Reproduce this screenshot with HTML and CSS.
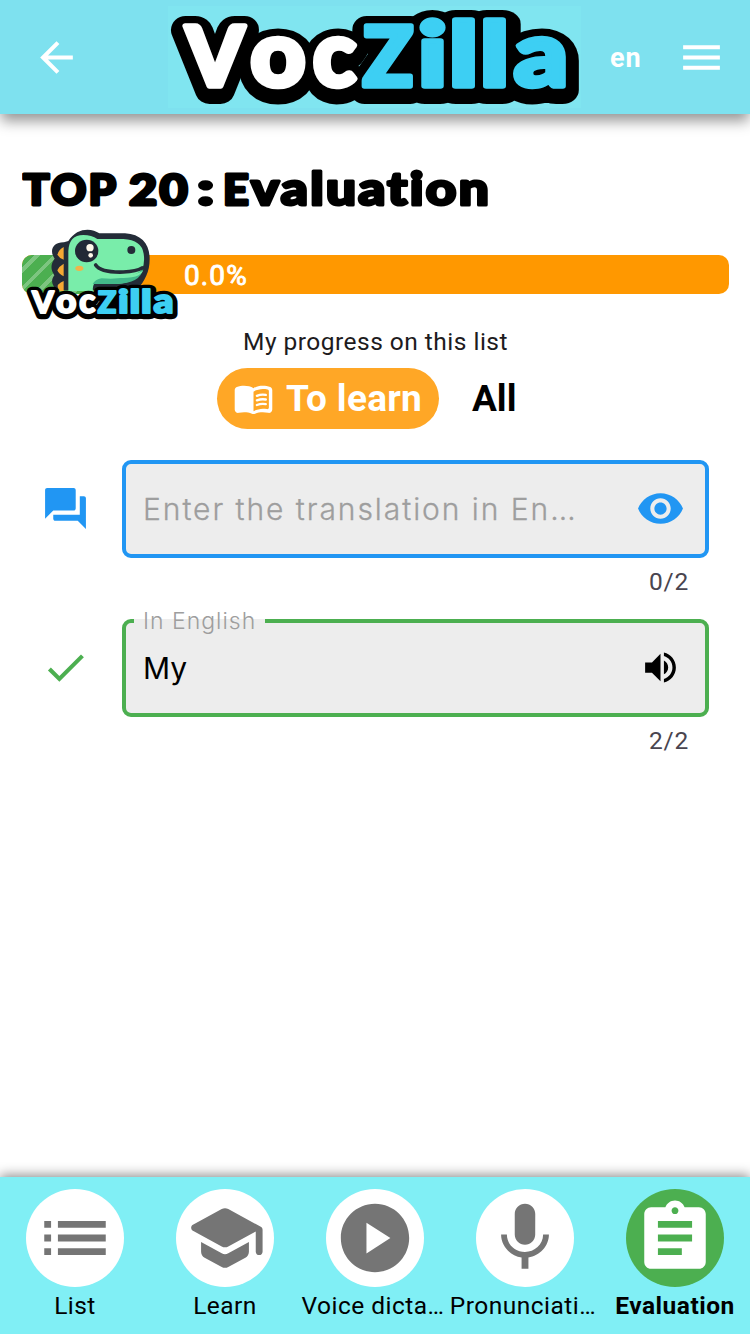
FILE: index.html
```html
<!DOCTYPE html>
<html lang="en">
<head>
<meta charset="utf-8">
<title>VocZilla</title>
<link rel="stylesheet" href="styles.css">
</head>
<body>
<div class="app">
  <header class="topbar">
    <svg class="back" viewBox="0 0 24 24"><path d="M20 11H7.83l5.59-5.59L12 4l-8 8 8 8 1.41-1.41L7.83 13H20v-2z"/></svg>
    <svg class="logo" viewBox="168 6 413 102">
      <defs>
        <g id="voc">
          <text x="186" y="85.5" font-size="81" textLength="58" lengthAdjust="spacingAndGlyphs">V</text>
          <text x="250.5" y="85.5" font-size="91" textLength="55" lengthAdjust="spacingAndGlyphs">o</text>
          <text x="313" y="85.5" font-size="91" textLength="43" lengthAdjust="spacingAndGlyphs">c</text>
        </g>
        <g id="zilla">
          <text x="363" y="85.5" font-size="81" textLength="50" lengthAdjust="spacingAndGlyphs">Z</text>
          <text x="418" y="85.5" font-size="87" textLength="29" lengthAdjust="spacingAndGlyphs">i</text>
          <text x="449" y="85.5" font-size="87" textLength="29" lengthAdjust="spacingAndGlyphs">l</text>
          <text x="480" y="85.5" font-size="87" textLength="29" lengthAdjust="spacingAndGlyphs">l</text>
          <text x="514" y="85.5" font-size="91" textLength="54" lengthAdjust="spacingAndGlyphs">a</text>
        </g>
        <g id="wordmark" class="wordmark">
          <g class="shade"><use href="#voc" y="4"/><use href="#zilla" y="4"/></g>
          <use class="white" href="#voc"/>
          <use class="blue" href="#zilla"/>
        </g>
      </defs>
      <use href="#wordmark"/>
    </svg>
    <span class="lang">en</span>
    <svg class="menu" viewBox="0 0 24 24"><path d="M3 18h18v-2H3v2zm0-5h18v-2H3v2zm0-7v2h18V6H3z"/></svg>
  </header>

  <main class="content">
    <h1 class="title">
      <svg class="title-text" viewBox="0 0 480 60">
        <text class="caps" x="1" y="43.5" textLength="95" lengthAdjust="spacingAndGlyphs">TOP</text>
        <text class="caps" x="107" y="43.5" textLength="61" lengthAdjust="spacingAndGlyphs">20</text>
        <text x="175" y="43.5" textLength="20" lengthAdjust="spacingAndGlyphs">:</text>
        <text y="43.5"><tspan class="caps" x="201" textLength="28" lengthAdjust="spacingAndGlyphs">E</tspan><tspan x="229" textLength="240" lengthAdjust="spacingAndGlyphs">valuation</tspan></text>
      </svg>
    </h1>

    <div class="progress">
      <div class="done"></div>
      <span class="percent">0.0%</span>
      <svg class="mascot" viewBox="60 230 480 285">
        <path d="M205 272C230 231 275 232 298 249H375C425 252 449 282 449 325C449 365 435 390 410 420H170C153 400 153 390 163 375C150 355 153 340 164 325C146 300 160 275 192 276Z" fill="#242c38"/>
        <path d="M191 290V328Q177 322 172 313Q176 298 191 290ZM191 340V378Q176 371 172 360Q178 347 191 340ZM191 392V422H177Q171 410 174 403Q182 395 191 392Z" fill="#f5a833"/>
        <path d="M205 422V302Q207 254 250 254Q275 254 292 266H370Q425 269 431 310Q438 356 408 380Q390 398 350 401H282Q277 410 279 422Z" fill="#79edaa"/>
        <path d="M430 356Q390 391 305 384Q285 388 278 401H350Q420 399 430 356Z" fill="#43b98b"/>
        <path d="M303 366Q365 392 429 362Q420 378 395 381Q340 388 303 366Z" fill="#79edaa"/>
        <path d="M287 344Q302 367 370 365Q410 363 426 353" fill="none" stroke="#242c38" stroke-width="11" stroke-linecap="round"/>
        <ellipse cx="260" cy="302" rx="35" ry="34" fill="#222936"/>
        <circle cx="270" cy="292" r="11" fill="#fff8ea"/><circle cx="272" cy="315" r="7" fill="#fff8ea"/>
        <circle cx="394" cy="299" r="12" fill="#242c38"/>
        <ellipse cx="238" cy="354" rx="12" ry="8" fill="#f0b44b"/>
        <use href="#wordmark" transform="translate(-110 392) scale(1.11)"/>
      </svg>
    </div>
    <p class="caption">My progress on this list</p>

    <div class="filters">
      <button class="chip"><svg viewBox="0 0 24 24"><path fill-rule="evenodd" d="M17.5 4.5c-1.95 0-4.05.4-5.5 1.5-1.45-1.1-3.55-1.5-5.5-1.5-1.45 0-2.99.22-4.28.79C1.49 5.62 1 6.33 1 7.14v11.28c0 1.3 1.22 2.26 2.48 1.94.98-.25 2.02-.36 3.02-.36 1.56 0 3.22.26 4.56.92.6.3 1.28.3 1.87 0 1.34-.67 3-.92 4.56-.92 1 0 2.04.11 3.02.36 1.26.33 2.48-.63 2.48-1.94V7.14c0-.81-.49-1.52-1.22-1.85-1.28-.57-2.82-.79-4.27-.79zM21 17.23c0 .63-.58 1.09-1.2.98-.75-.14-1.53-.2-2.3-.2-1.7 0-4.15.65-5.5 1.5V8c1.35-.85 3.8-1.5 5.5-1.5.92 0 1.83.09 2.7.28.46.1.8.51.8.98v9.47z"/><path class="lines" d="M14 10.4q2.5-1 5.2-.5M14 13.1q2.5-1 5.2-.5M14 15.8q2.5-1 5.2-.5"/></svg>To learn</button>
      <button class="all">All</button>
    </div>

    <div class="row">
      <svg class="lead blue" viewBox="0 0 24 24"><path d="M21 6h-2v9H6v2c0 .55.45 1 1 1h11l4 4V7c0-.55-.45-1-1-1zm-4 6V3c0-.55-.45-1-1-1H3c-.55 0-1 .45-1 1v14l4-4h10c.55 0 1-.45 1-1z"/></svg>
      <div class="field asking">
        <span class="placeholder">Enter the translation in En<span class="dots">…</span></span>
        <svg class="eye blue" viewBox="0 0 24 24"><path d="M12 4.5C7 4.5 2.73 7.61 1 12c1.73 4.39 6 7.5 11 7.5s9.27-3.11 11-7.5c-1.73-4.39-6-7.5-11-7.5zM12 17c-2.76 0-5-2.24-5-5s2.24-5 5-5 5 2.24 5 5-2.24 5-5 5zm0-8c-1.66 0-3 1.34-3 3s1.34 3 3 3 3-1.34 3-3-1.34-3-3-3z"/></svg>
      </div>
    </div>
    <p class="counter">0/2</p>
    <div class="row second">
      <svg class="lead green" viewBox="0 0 24 24"><path d="M9 16.17 4.83 12l-1.42 1.41L9 19 21 7l-1.41-1.41z"/></svg>
      <div class="field right">
        <span class="label">In English</span>
        <span class="value">My</span>
        <svg class="speaker" viewBox="0 0 24 24"><path d="M3 9v6h4l5 5V4L7 9H3zm13.5 3c0-1.77-1.02-3.29-2.5-4.03v8.05c1.48-.73 2.5-2.25 2.5-4.02zM14 3.23v2.06c2.89.86 5 3.54 5 6.71s-2.11 5.85-5 6.71v2.06c4.01-.91 7-4.49 7-8.77s-2.99-7.86-7-8.77z"/></svg>
      </div>
    </div>
    <p class="counter">2/2</p>
  </main>

  <nav class="tabs">
    <a class="tab"><span class="disc"><svg viewBox="0 0 24 24"><path d="M3 13h2v-2H3v2zm0 4h2v-2H3v2zm0-8h2V7H3v2zm4 4h14v-2H7v2zm0 4h14v-2H7v2zM7 7v2h14V7H7z"/></svg></span><span class="name">List</span></a>
    <a class="tab"><span class="disc"><svg viewBox="0 0 24 24"><path d="M5 13.18v2.81c0 .73.4 1.41 1.04 1.76l5 2.73c.6.33 1.32.33 1.92 0l5-2.73c.64-.35 1.04-1.03 1.04-1.76v-2.81l-6.04 3.3c-.6.33-1.32.33-1.92 0L5 13.18zm6.04-9.66-8.43 4.6c-.69.38-.69 1.38 0 1.76l8.43 4.6c.6.33 1.32.33 1.92 0L21 10.09V16c0 .55.45 1 1 1s1-.45 1-1V9.59c0-.37-.2-.7-.52-.88l-9.52-5.19c-.6-.32-1.32-.32-1.92 0z"/></svg></span><span class="name">Learn</span></a>
    <a class="tab"><span class="disc"><svg viewBox="0 0 24 24"><path d="M12 2C6.48 2 2 6.48 2 12s4.48 10 10 10 10-4.48 10-10S17.52 2 12 2zM9.5 16.5v-9l7 4.5-7 4.5z"/></svg></span><span class="name cut">Voice dicta…</span></a>
    <a class="tab"><span class="disc"><svg viewBox="0 0 24 24"><path d="M12 14c1.66 0 2.99-1.34 2.99-3L15 5c0-1.66-1.34-3-3-3S9 3.34 9 5v6c0 1.66 1.34 3 3 3zm5.3-3c0 3-2.54 5.1-5.3 5.1S6.7 14 6.7 11H5c0 3.41 2.72 6.23 6 6.72V21h2v-3.28c3.28-.48 6-3.3 6-6.72h-1.7z"/></svg></span><span class="name cut">Pronunciati…</span></a>
    <a class="tab active"><span class="disc"><svg viewBox="0 0 24 24"><path d="M19 3h-4.18C14.4 1.84 13.3 1 12 1c-1.3 0-2.4.84-2.82 2H5c-1.1 0-2 .9-2 2v14c0 1.1.9 2 2 2h14c1.1 0 2-.9 2-2V5c0-1.1-.9-2-2-2zm-7 0c.55 0 1 .45 1 1s-.45 1-1 1-1-.45-1-1 .45-1 1-1zm2 14H7v-2h7v2zm3-4H7v-2h10v2zm0-4H7V7h10v2z"/></svg></span><span class="name">Evaluation</span></a>
  </nav>
</div>
</body>
</html>
```
FILE: styles.css
```css
* { box-sizing: border-box; }
body { margin: 0; background: #fff; font-family: Roboto, "Liberation Sans", sans-serif; color: #000; }
p, h1 { margin: 0; }
svg { display: block; flex: none; }
button { border: 0; background: none; padding: 0; font: inherit; color: inherit; }
.app { width: 750px; height: 1334px; display: flex; flex-direction: column; overflow: hidden; }

.topbar { height: 114px; flex: none; display: flex; align-items: center; background: #7ee1ef; color: #fff; box-shadow: 0 8px 13px -1px rgba(0,0,0,.42); }
.topbar svg { fill: #fff; }
.back { width: 49px; height: 49px; margin-left: 32px; }
.logo { width: 413px; height: 102px; margin-left: 87px; background: #80e5f0; }
.wordmark { font-family: Lato, "Open Sans", sans-serif; font-weight: 900; stroke-linejoin: round; }
.wordmark .shade { fill: #000; stroke: #000; stroke-width: 28px; }
.wordmark .white { fill: #fff; stroke: #fff; stroke-width: 5.5px; }
.wordmark .blue { fill: #3dcff3; stroke: #3dcff3; stroke-width: 5.5px; }
.lang { width: 67px; margin-left: 29px; padding-top: 2px; font-size: 27px; font-weight: 700; letter-spacing: 1px; }
.menu { width: 49px; height: 49px; }

.content { flex: 1; padding: 47px 21px 0 22px; }
.title { height: 94px; }
.title-text { width: 480px; height: 60px; font: 900 46px Lato, sans-serif; font-variant-ligatures: none; letter-spacing: 2px; stroke: #000; stroke-width: 3px; stroke-linejoin: round; }
.caps { font-size: 41.5px; }
.progress { position: relative; height: 39px; display: flex; align-items: center; border-radius: 10px; background: #ff9800; }
.done { width: 78px; height: 39px; border-radius: 10px 0 0 10px; background: repeating-linear-gradient(135deg, #4caf50 0 9px, #7dc580 9px 13px); }
.percent { margin-left: 84px; padding-top: 1px; font-size: 28px; letter-spacing: 1.1px; color: #fff; -webkit-text-stroke: .9px #fff; }
.mascot { position: absolute; left: -2px; top: -28px; width: 160px; height: 95px; overflow: visible; }
.caption { margin-top: 33px; text-align: center; font-size: 24.5px; line-height: 29px; letter-spacing: .48px; color: #1d1b20; }
.filters { display: flex; margin: 12px 0 0 195px; gap: 33px; font-size: 37px; font-weight: 700; }
.chip { width: 222px; height: 61px; display: flex; align-items: center; gap: 12px; padding-left: 16px; border-radius: 31px; background: #ffa726; color: #fff; white-space: nowrap; letter-spacing: .3px; }
.chip svg { width: 41px; height: 41px; fill: #fff; }
.chip .lines { fill: none; stroke: #fff; stroke-width: 1.4; stroke-linecap: round; }

.row { display: flex; align-items: center; margin-top: 31px; padding-left: 19px; }
.second { margin-top: 22px; }
.lead { width: 49px; height: 49px; margin: 0 32px 2px 0; }
.blue { fill: #2196f3; }
.green { fill: #4caf50; }
.field { position: relative; width: 587px; height: 98px; display: flex; align-items: center; justify-content: space-between; border: 4px solid; border-radius: 9px; background: #ededed; padding: 0 20px 0 17px; font-family: Inter, sans-serif; font-weight: 300; font-size: 30px; }
.asking { border-color: #2196f3; }
.right { border-color: #4caf50; }
.placeholder { color: #9e9e9e; letter-spacing: 1.95px; white-space: nowrap; -webkit-text-stroke: .3px #9e9e9e; }
.eye { width: 49px; height: 49px; margin-bottom: 1px; }
.value { font-weight: 400; }
.speaker { width: 41px; height: 41px; margin: 0 4px 1px 0; }
.label { position: absolute; left: 8px; top: -18px; width: 131px; padding-left: 9px; font-size: 23px; line-height: 32px; letter-spacing: 1px; color: #9e9e9e; background: linear-gradient(transparent 14px, #ededed 14px); }
.counter { margin-top: 8px; padding-right: 40px; text-align: right; font-size: 24.5px; line-height: 31px; letter-spacing: .8px; color: #49454f; }

.tabs { height: 157px; flex: none; display: flex; background: #80eff5; box-shadow: 0 -2px 11px rgba(0,0,0,.45); }
.tab { width: 150px; padding-top: 12px; display: flex; flex-direction: column; align-items: center; gap: 4px; }
.disc { width: 98px; height: 98px; display: flex; align-items: center; justify-content: center; border-radius: 50%; background: #fff; }
.disc svg { width: 82px; height: 82px; fill: #757575; }
.name { font-size: 24.5px; line-height: 29px; letter-spacing: .48px; white-space: nowrap; }
.cut { margin-right: 4px; }
.active .disc { background: #4caf50; }
.active .disc svg { fill: #fff; }
.active .name { font-weight: 700; letter-spacing: .5px; }
```
